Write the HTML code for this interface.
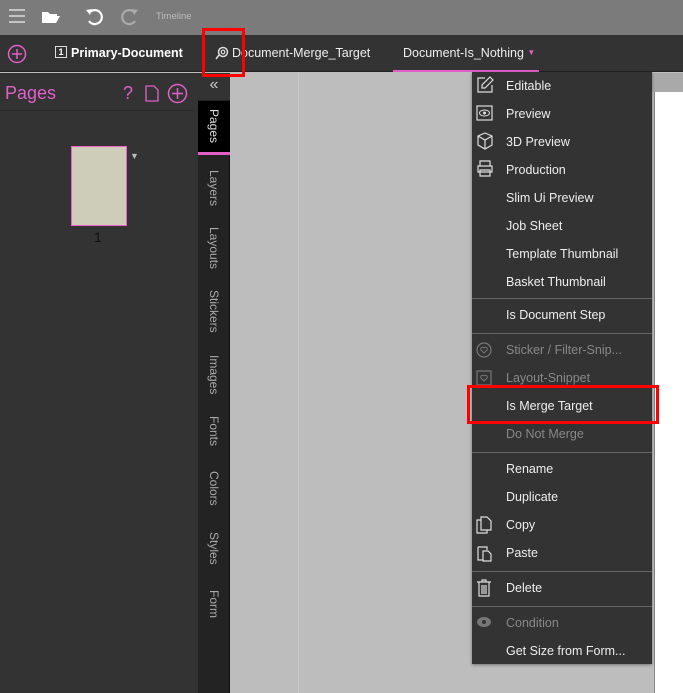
<!DOCTYPE html>
<html><head><style>
*{margin:0;padding:0;box-sizing:border-box}
body{width:683px;height:693px;overflow:hidden;background:#bdbdbd;font-family:"Liberation Sans",sans-serif;position:relative}
.abs{position:absolute}
.top{left:0;top:0;width:683px;height:35px;background:#7b7b7b}
.tabs{left:0;top:35px;width:683px;height:37px;background:#333;border-bottom:1px solid #222}
.left{left:0;top:73px;width:198px;height:620px;background:#333}
.side{left:198px;top:73px;width:32px;height:620px;background:#232323;border-right:1px solid #111}
.vt{position:absolute;left:0;width:32px;color:#aaa;font-size:12px;writing-mode:vertical-rl;display:flex;align-items:center;justify-content:center}
.menu{left:472px;top:72px;width:180px;height:592px;background:#333;box-shadow:0 1px 3px rgba(0,0,0,.4)}
.it{position:absolute;left:34px;color:#eee;font-size:12.5px;height:28px;line-height:28px}
.dis{color:#888}
.sep{position:absolute;left:0;width:180px;height:1px;background:#666}
.ic{position:absolute;left:4px}
</style></head><body>
<div class="abs top">
 <svg class="abs" style="left:9px;top:9px" width="16" height="14"><path d="M0 1H16M0 7H16M0 13H16" stroke="#ddd" stroke-width="1.5"/></svg>
 <svg class="abs" style="left:41px;top:10px" width="20" height="14"><path d="M1 2h6l2 2h7v2H5L1 13z" fill="#fff"/><path d="M5 6h14l-4 7H1z" fill="#fff"/></svg>
 <svg class="abs" style="left:85px;top:7px" width="20" height="20"><path d="M5 5A7 7 0 1 1 4 14" stroke="#fff" stroke-width="2.2" fill="none"/><path d="M1 3L7 2L5 8z" fill="#fff"/></svg>
 <svg class="abs" style="left:119px;top:7px" width="20" height="20"><path d="M15 5A7 7 0 1 0 16 14" stroke="#aaa" stroke-width="2.2" fill="none"/><path d="M19 3L13 2L15 8z" fill="#aaa"/></svg>
 <div class="abs" style="left:156px;top:11px;font-size:9.5px;color:#bbb">Timeline</div>
</div>
<div class="abs tabs">
 <svg class="abs" style="left:7px;top:9px" width="20" height="20"><circle cx="10" cy="10" r="8.5" stroke="#e060c8" stroke-width="1.5" fill="none"/><path d="M10 5v10M5 10h10" stroke="#e060c8" stroke-width="1.5"/></svg>
 <div class="abs" style="left:55px;top:11px;width:12px;height:12px;border:1.3px solid #ddd;font-size:9px;color:#fff;text-align:center;line-height:10px;font-weight:bold">1</div>
 <div class="abs" style="left:71px;top:11px;color:#fff;font-weight:bold;font-size:12.5px">Primary-Document</div>
 <svg class="abs" style="left:215px;top:11px" width="14" height="14"><circle cx="8" cy="6" r="4.5" stroke="#ddd" stroke-width="1.5" fill="none"/><circle cx="8" cy="6" r="1.8" stroke="#ddd" stroke-width="1.2" fill="none"/><path d="M4 9L1 13" stroke="#ddd" stroke-width="1.5"/></svg>
 <div class="abs" style="left:232px;top:11px;color:#eee;font-size:12.5px">Document-Merge_Target</div>
 <div class="abs" style="left:403px;top:11px;color:#eee;font-size:12.5px">Document-Is_Nothing <span style="color:#e060c8;font-size:8px;vertical-align:2px">▼</span></div>
 <div class="abs" style="left:393px;top:35px;width:146px;height:2px;background:#e060c8"></div>
</div>
<div class="abs left">
 <div class="abs" style="left:5px;top:10px;color:#e060c8;font-size:18px">Pages</div>
 <div class="abs" style="left:123px;top:10px;color:#e060c8;font-size:18px">?</div>
 <svg class="abs" style="left:145px;top:12px" width="14" height="17"><path d="M1 1h8l4 4v11H1z" stroke="#e060c8" stroke-width="1.3" fill="none"/></svg>
 <svg class="abs" style="left:167px;top:10px" width="21" height="21"><circle cx="10.5" cy="10.5" r="9" stroke="#e060c8" stroke-width="1.5" fill="none"/><path d="M10.5 5v11M5 10.5h11" stroke="#e060c8" stroke-width="1.5"/></svg>
 <div class="abs" style="left:0;top:37px;width:194px;height:1px;background:#2a2a2a"></div>
 <div class="abs" style="left:71px;top:73px;width:56px;height:80px;background:#cdcdb9;border:1px solid #f060c8"></div>
 <div class="abs" style="left:130px;top:78px;color:#bbb;font-size:9px">▼</div>
 <div class="abs" style="left:94px;top:156px;color:#111;font-size:14px">1</div>
</div>
<div class="abs side">
 <div class="abs" style="left:0;top:0;width:32px;height:27px;background:#333;color:#ccc;font-size:16px;text-align:center;line-height:24px">«</div>
 <div class="vt" style="top:28px;height:54px;background:#000;color:#ddd;border-bottom:3px solid #e060c8">Pages</div>
 <div class="vt" style="top:88px;height:54px">Layers</div>
 <div class="vt" style="top:148px;height:54px">Layouts</div>
 <div class="vt" style="top:210px;height:56px">Stickers</div>
 <div class="vt" style="top:273px;height:58px">Images</div>
 <div class="vt" style="top:332px;height:52px">Fonts</div>
 <div class="vt" style="top:389px;height:52px">Colors</div>
 <div class="vt" style="top:449px;height:52px">Styles</div>
 <div class="vt" style="top:506px;height:50px">Form</div>
</div>
<div class="abs" style="left:640px;top:73px;width:43px;height:19px;background:#a9a9a9"></div>
<div class="abs" style="left:298px;top:73px;width:1px;height:620px;background:#c8c8c8"></div>
<div class="abs" style="left:654px;top:92px;width:29px;height:601px;background:#fff;border-left:1px solid #888"></div>
<div class="abs menu">
 <svg class="ic" style="top:4px" width="18" height="18"><path d="M9 2H2v14h14V9M14 1l3 3-8 8H6V9z" stroke="#ddd" stroke-width="1.2" fill="none"/></svg>
 <div class="it" style="top:0">Editable</div>
 <svg class="ic" style="top:33px" width="18" height="16"><rect x="1" y="1" width="15" height="14" stroke="#ddd" stroke-width="1.2" fill="none"/><ellipse cx="8.5" cy="8" rx="5" ry="3" stroke="#ddd" fill="none"/><circle cx="8.5" cy="8" r="1.5" fill="#ddd"/></svg>
 <div class="it" style="top:28px">Preview</div>
 <svg class="ic" style="top:60px" width="18" height="18"><path d="M9 1l7 3v9l-7 4-7-4V4zM2 4l7 4 7-4M9 8v9" stroke="#ddd" stroke-width="1.2" fill="none"/></svg>
 <div class="it" style="top:56px">3D Preview</div>
 <svg class="ic" style="top:88px" width="18" height="18"><path d="M4 6V1h10v5M2 6h14v6H2zM4 10h10v6H4z" stroke="#ddd" stroke-width="1.2" fill="none"/></svg>
 <div class="it" style="top:84px">Production</div>
 <div class="it" style="top:112px">Slim Ui Preview</div>
 <div class="it" style="top:140px">Job Sheet</div>
 <div class="it" style="top:168px">Template Thumbnail</div>
 <div class="it" style="top:196px">Basket Thumbnail</div>
 <div class="sep" style="top:226px"></div>
 <div class="it" style="top:229px">Is Document Step</div>
 <div class="sep" style="top:261px"></div>
 <svg class="ic" style="top:270px" width="16" height="16"><circle cx="8" cy="8" r="7" stroke="#777" stroke-width="1.2" fill="none"/><path d="M8 11L5 8a1.5 1.5 0 0 1 3-2a1.5 1.5 0 0 1 3 2z" stroke="#777" fill="none"/></svg>
 <div class="it dis" style="top:264px">Sticker / Filter-Snip...</div>
 <svg class="ic" style="top:298px" width="16" height="16"><rect x="1" y="1" width="14" height="14" stroke="#777" stroke-width="1.2" fill="none"/><path d="M8 11L5 8a1.5 1.5 0 0 1 3-2a1.5 1.5 0 0 1 3 2z" stroke="#777" fill="none"/></svg>
 <div class="it dis" style="top:292px">Layout-Snippet</div>
 <div class="it" style="top:320px">Is Merge Target</div>
 <div class="it dis" style="top:348px">Do Not Merge</div>
 <div class="sep" style="top:380px"></div>
 <div class="it" style="top:383px">Rename</div>
 <div class="it" style="top:411px">Duplicate</div>
 <svg class="ic" style="top:444px" width="16" height="18"><path d="M5 1h6l4 4v9H5zM5 4H1v13h10v-3" stroke="#ddd" stroke-width="1.2" fill="none"/></svg>
 <div class="it" style="top:439px">Copy</div>
 <svg class="ic" style="top:472px" width="16" height="18"><path d="M2 3h9v3M2 3v13h5M7 7h5l3 3v7H7z" stroke="#ddd" stroke-width="1.2" fill="none"/></svg>
 <div class="it" style="top:467px">Paste</div>
 <div class="sep" style="top:499px"></div>
 <svg class="ic" style="top:507px" width="16" height="18"><path d="M1 3h14M6 3V1h4v2M3 3v14h10V3M6 6v9M8 6v9M10 6v9" stroke="#ddd" stroke-width="1.2" fill="none"/></svg>
 <div class="it" style="top:502px">Delete</div>
 <div class="sep" style="top:534px"></div>
 <svg class="ic" style="top:544px" width="18" height="12"><ellipse cx="8" cy="6" rx="7" ry="5" fill="#777"/><circle cx="8" cy="6" r="2" fill="#333"/></svg>
 <div class="it dis" style="top:537px">Condition</div>
 <div class="it" style="top:565px">Get Size from Form...</div>
</div>
<div class="abs" style="left:202px;top:28px;width:43px;height:49px;border:3px solid #f00"></div>
<div class="abs" style="left:467px;top:385px;width:192px;height:39px;border:3px solid #f00"></div>
</body></html>
